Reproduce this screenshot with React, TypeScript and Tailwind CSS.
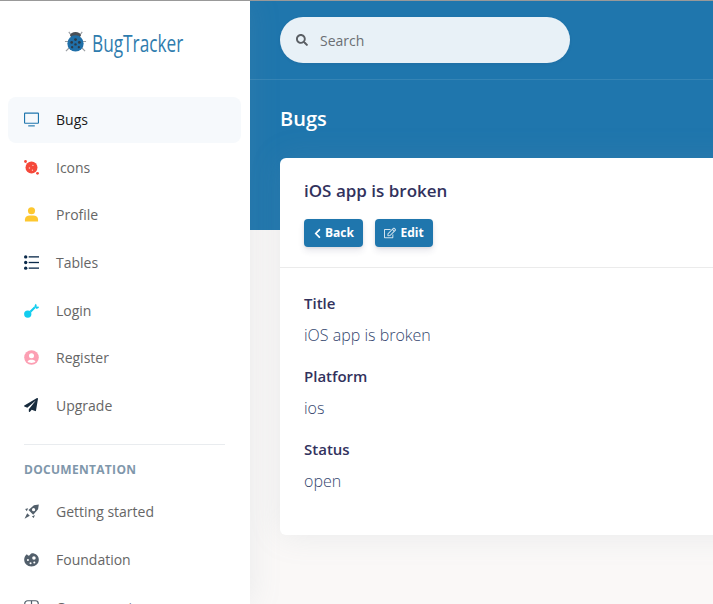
import { FaChevronLeft, FaRegEdit, FaSearch, FaPaperPlane } from 'react-icons/fa'
import { type ReactNode } from 'react'

const Tv = () => (
  <svg viewBox="0 0 16 16" className="w-[15px] h-[15px]" fill="none" stroke="#1f76ad" strokeWidth="1.2">
    <rect x="0.6" y="1.2" width="14.8" height="10.8" rx="0.5" />
    <path d="M4.5 14.8h7" />
  </svg>
)

const Planet = () => (
  <svg viewBox="0 0 16 16" className="w-[15px] h-[15px]" fill="#f5483a">
    <circle cx="8" cy="8" r="6.400" />
    <circle cx="1.600" cy="1.600" r="1.500" />
    <circle cx="14.400" cy="14.200" r="1.500" />
    <circle cx="5.800" cy="8.500" r="0.800" fill="#ffd0c8" />
    <circle cx="9.500" cy="5.800" r="0.700" fill="#ffd0c8" />
    <circle cx="9" cy="10.800" r="0.700" fill="#ffd0c8" />
  </svg>
)

const User = () => (
  <svg viewBox="0 0 16 16" className="w-[15px] h-[15px]" fill="#fdc72f">
    <circle cx="8" cy="4" r="3.800" />
    <path d="M1 15.400v-2.200C1 10.600 3.400 9 6 9h4c2.600 0 5 1.600 5 4.200v2.200z" />
  </svg>
)

const ListIcon = () => (
  <svg viewBox="0 0 16 16" className="w-[15px] h-[15px]" fill="#0b2a4a">
    <circle cx="1.800" cy="2" r="1.800" />
    <circle cx="1.800" cy="8" r="1.800" />
    <circle cx="1.800" cy="14" r="1.800" />
    <rect x="5" y="1.300" width="11" height="1.400" />
    <rect x="5" y="7.300" width="11" height="1.400" />
    <rect x="5" y="13.300" width="11" height="1.400" />
  </svg>
)

const Key = () => (
  <svg viewBox="0 0 16 16" className="w-[15px] h-[15px]" fill="#11cdef">
    <circle cx="4" cy="11.800" r="3.900" />
    <path d="M6 8.400 10.800 3.600 12.400 5.200 7.600 10zM11 3.400 12.400 0.800 13.600 2 13.200 3.600 16 4 15.600 5.400 13.400 6.400z" />
  </svg>
)

const Circle = () => (
  <svg viewBox="0 0 16 16" className="w-[15px] h-[15px]">
    <circle cx="8" cy="8" r="7.800" fill="#fc9fb3" />
    <circle cx="8" cy="6.200" r="2.700" fill="#fff" />
    <path d="M3.800 12.600c.6-1.600 2-2.200 4.200-2.200s3.600.6 4.200 2.200c-1 .8-2.600 1.200-4.200 1.200s-3.200-.4-4.200-1.200z" fill="#fff" />
  </svg>
)

const Rocket = () => (
  <svg viewBox="0 0 16 16" className="w-[15px] h-[15px]" fill="#525f6b">
    <path d="M15.800.4 15 5.600 9.800 11.400 4.800 6.400 10.600 1.200z" />
    <circle cx="10.200" cy="6" r="1.700" fill="#fff" />
    <path d="M4.400 4.400 1.200 5.400 3 7.600zM11.600 11.800 10.400 15 8.400 13.200zM3.400 9.800 6.200 12.600.6 15.800z" />
  </svg>
)

const Palette = () => (
  <svg viewBox="0 0 16 16" className="w-[15px] h-[15px]" fill="#525f6b">
    <path d="M8.400 1.400c4.200 0 7.400 2.800 7.400 6.800s-3.400 7.200-7.800 7.200S.2 12.200.2 8.200C.2 5.600 1.400 3.600 3 2.400c.8.600 1.200 1.600 2.200 1.600 1.200 0 1.600-2.600 3.200-2.600z" />
    <circle cx="10.600" cy="6.400" r="1.900" fill="#fff" />
    <circle cx="4.200" cy="8.600" r="1.100" fill="#fff" />
    <circle cx="7" cy="12" r="1.100" fill="#fff" />
    <circle cx="11" cy="11.200" r="1.100" fill="#fff" />
  </svg>
)

const Blocks = () => (
  <svg viewBox="0 0 16 16" className="w-[15px] h-[15px]" fill="none" stroke="#525f6b" strokeWidth="1.300">
    <rect x="0.8" y="0.8" width="14.400" height="14.400" rx="3" />
    <path d="M8 .8v7M.8 7.800h14.400" />
  </svg>
)

const Ladybug = () => (
  <svg viewBox="0 0 24 24" className="w-[23px] h-[23px] shrink-0">
    <g stroke="#9a9ea3" strokeWidth="1.200" fill="none">
      <path d="M5 2 7.500 5.500M19 2l-2.500 3.500M1 12H5M23 12H19M2 22 6 18M22 22 18 18" />
    </g>
    <ellipse cx="12" cy="5.500" rx="5.500" ry="3.500" fill="#4a4f55" />
    <circle cx="12" cy="14" r="8.500" fill="#1f6fa8" />
    <g fill="#2d3a46">
      <circle cx="12" cy="10" r="1.500" />
      <circle cx="8" cy="13" r="1.400" />
      <circle cx="16" cy="13" r="1.400" />
      <circle cx="12" cy="15" r="1.300" />
      <circle cx="8.500" cy="18" r="1.200" />
      <circle cx="15.500" cy="18" r="1.200" />
    </g>
  </svg>
)

const links: { label: string; icon: ReactNode; active?: boolean }[] = [
  { label: 'Bugs', icon: <Tv />, active: true },
  { label: 'Icons', icon: <Planet /> },
  { label: 'Profile', icon: <User /> },
  { label: 'Tables', icon: <ListIcon /> },
  { label: 'Login', icon: <Key /> },
  { label: 'Register', icon: <Circle /> },
  { label: 'Upgrade', icon: <FaPaperPlane className="w-[14px] h-[14px] text-[#172b3d]" /> },
]

function NavRow({ label, icon, active }: { label: string; icon: ReactNode; active?: boolean }) {
  return (
    <div className={`ml-2 mr-[9px] mb-[2px] flex items-center h-[45.6px] px-4 rounded-lg text-[14px] ${active ? 'bg-[#f6f9fc] text-[#1a1a1a]' : 'text-[#666666]'}`}>
      <span className="w-[32px] flex items-center shrink-0">{icon}</span>
      {label}
    </div>
  )
}

function Field({ label, value }: { label: string; value: string }) {
  return (
    <div className="mb-[18px]">
      <div className="text-[15px] leading-[22px] font-semibold text-[#32325d]">{label}</div>
      <div className="mt-[9px] text-[16px] leading-[24px] font-light text-[#34466e]">{value}</div>
    </div>
  )
}

export default function App() {
  return (
    <div className="h-[604px] w-[713px] overflow-hidden flex border-t border-[#999999] bg-[#faf8f7] font-['Open_Sans',sans-serif]">
      <aside className="w-[250px] h-full shrink-0 bg-white overflow-hidden shadow-[0_0_30px_rgba(136,152,170,0.15)] z-10">
        <div className="h-[96px] pl-[64px] pt-[29px]">
          <div className="flex items-start gap-[5px] h-[32px]">
            <Ladybug />
            <span className="text-[23px] leading-[26px] text-[#2f7cae] font-medium whitespace-nowrap origin-left scale-x-[0.75]">BugTracker</span>
          </div>
        </div>
        {links.map((l) => (
          <NavRow key={l.label} {...l} />
        ))}
        <div className="ml-6 mr-[25px] mt-[16px] border-t border-[#e9ecef]" />
        <div className="mx-6 mt-[16px] mb-[10px] h-[18px] text-[12px] leading-[18px] font-bold tracking-[0.3px] text-[#7f97ab]">DOCUMENTATION</div>
        <NavRow label="Getting started" icon={<Rocket />} />
        <NavRow label="Foundation" icon={<Palette />} />
        <NavRow label="Components" icon={<Blocks />} />
      </aside>
      <main className="flex-1 min-w-0 relative overflow-hidden">
        <div className="bg-[#1f76ad] h-[229px]">
          <div className="h-[79px] border-b border-[#ffffff1a] pl-[30px] pt-[16px]">
            <div className="w-[290px] h-[46px] rounded-full bg-[#e8f1f7] flex items-center pl-[16px] text-[14px] text-[#6b6f73] shadow-[0_1px_3px_rgba(50,50,93,0.1)]">
              <FaSearch className="w-[12px] h-[12px] text-[#5a5f64] mr-[12px]" />
              Search
            </div>
          </div>
          <h1 className="pl-[30px] mt-[24px] text-[20px] leading-[30px] font-semibold text-white">Bugs</h1>
        </div>
        <div className="-mt-[72px] ml-[30px] w-[700px] h-[377px] rounded-l-md bg-white shadow-[0_0_32px_rgba(136,152,170,0.15)] relative">
          <div className="h-[110px] border-b border-[#ebebeb] px-6 pt-[21px]">
            <h2 className="text-[17px] leading-[24px] font-semibold text-[#32325d]">iOS app is broken</h2>
            <div className="flex gap-3 mt-[16px]">
              <button className="h-[28px] w-[59px] rounded bg-[#1f76ad] text-white text-[12px] font-bold flex items-center justify-center gap-[3px] shadow-[0_4px_6px_rgba(50,50,93,0.11),0_1px_3px_rgba(0,0,0,0.08)]">
                <FaChevronLeft className="w-[9px] h-[11px]" /> Back
              </button>
              <button className="h-[28px] w-[58px] rounded bg-[#1f76ad] text-white text-[12px] font-bold flex items-center justify-center gap-[4px] shadow-[0_4px_6px_rgba(50,50,93,0.11),0_1px_3px_rgba(0,0,0,0.08)]">
                <FaRegEdit className="w-[12px] h-[12px] opacity-80" /> Edit
              </button>
            </div>
          </div>
          <div className="px-6 pt-[24px]">
            <Field label="Title" value="iOS app is broken" />
            <Field label="Platform" value="ios" />
            <Field label="Status" value="open" />
          </div>
        </div>
      </main>
    </div>
  )
}
